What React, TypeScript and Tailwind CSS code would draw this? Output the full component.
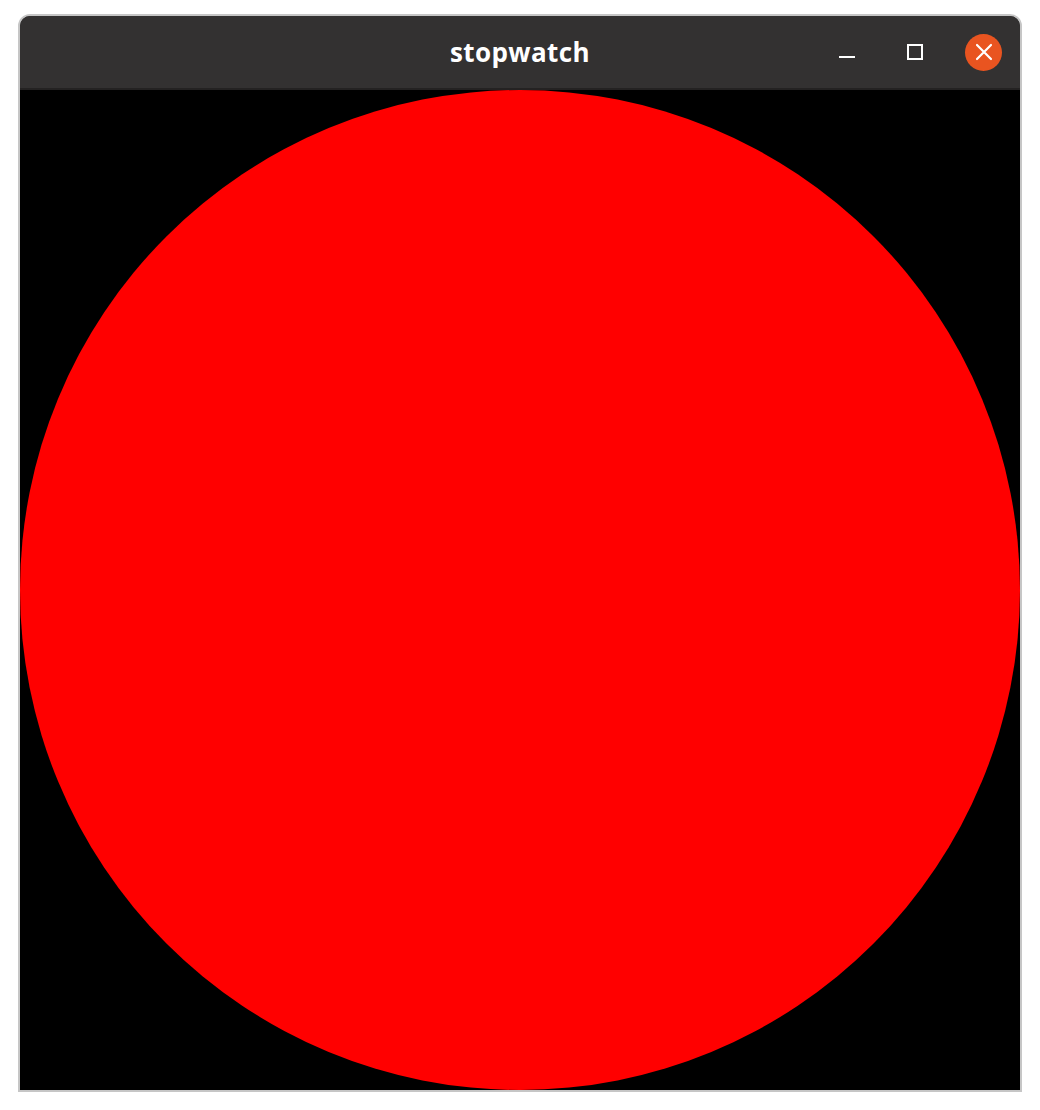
import React from 'react';

const TitleButton: React.FC<{ children: React.ReactNode; label: string; className?: string }> = ({ children, label, className }) => (
  <button aria-label={label} className={`flex items-center justify-center ${className ?? ''}`}>
    {children}
  </button>
);

export default function App() {
  return (
    <div className="min-h-[1110px] w-[1040px] bg-white pt-[14px] pl-[18px]">
      {/* window frame */}
      <div className="w-[1004px] rounded-t-[12px] border-2 border-[#c6c6c6] bg-[#333131] overflow-hidden">
        {/* header bar */}
        <div className="relative flex h-[72px] items-center justify-center bg-[#333131]">
          <span
            className="text-[26px] font-bold text-white tracking-[0.4px]"
            style={{ fontFamily: '"Open Sans", "Noto Sans", sans-serif' }}
          >
            stopwatch
          </span>
          <div className="absolute right-[18px] top-0 flex h-full items-center">
            <TitleButton label="Minimize" className="h-[36px] w-[36px] mr-[32px]">
              <span className="mt-[10px] block h-[2px] w-[16px] bg-white" />
            </TitleButton>
            <TitleButton label="Maximize" className="h-[36px] w-[36px] mr-[32px]">
              <span className="block h-[16px] w-[16px] border-2 border-white" />
            </TitleButton>
            <TitleButton label="Close" className="h-[37px] w-[37px] rounded-full bg-[#e95420]">
              <svg width="18" height="18" viewBox="0 0 18 18" fill="none">
                <path d="M2 2L16 16M16 2L2 16" stroke="white" strokeWidth="2.2" strokeLinecap="round" />
              </svg>
            </TitleButton>
          </div>
        </div>
        <div className="h-[2px] bg-[#242222]" />
        {/* canvas */}
        <div className="flex h-[1000px] w-[1000px] items-center justify-center bg-black">
          <div className="h-[1000px] w-[1000px] rounded-full bg-[#ff0000]" />
        </div>
      </div>
    </div>
  );
}
